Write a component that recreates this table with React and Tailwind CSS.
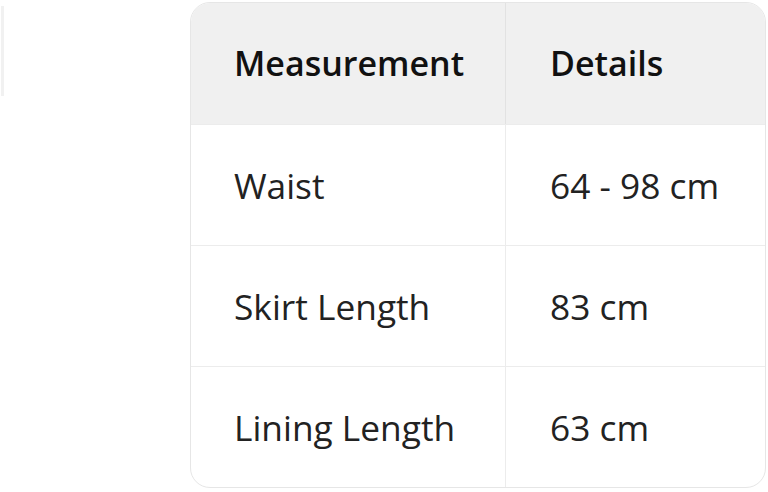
import React from 'react';

const rows = [
  ['Waist', '64 - 98 cm'],
  ['Skirt Length', '83 cm'],
  ['Lining Length', '63 cm'],
];

const App = () => {
  return (
    <div className="relative h-[492px] w-[768px] bg-white font-['Open_Sans','Noto_Sans',sans-serif]">
      <div className="absolute left-[1px] top-[6px] h-[90px] w-[3px] bg-[#f1f1f1]" />
      <div className="pl-[190px] pr-[2px] pt-[2px]">
        <table className="w-full border-separate border-spacing-0 overflow-hidden rounded-[20px] border border-[#e6e6e6]">
          <thead>
            <tr className="bg-[#f0f0f0] text-left text-[34px]">
              <th className="h-[121px] w-[315px] border-r border-[#e2e2e2] pl-[43px] font-semibold text-[#111]">Measurement</th>
              <th className="h-[121px] pl-[44px] font-semibold text-[#111]">Details</th>
            </tr>
          </thead>
          <tbody className="text-[35.3px]">
            {rows.map(([label, value]) => (
              <tr key={label}>
                <td className="h-[121px] border-r border-t border-[#ececec] pl-[43px] text-[#222]">{label}</td>
                <td className="h-[121px] border-t border-[#ececec] pl-[44px] text-[#222]">{value}</td>
              </tr>
            ))}
          </tbody>
        </table>
      </div>
    </div>
  );
};

export default App;
